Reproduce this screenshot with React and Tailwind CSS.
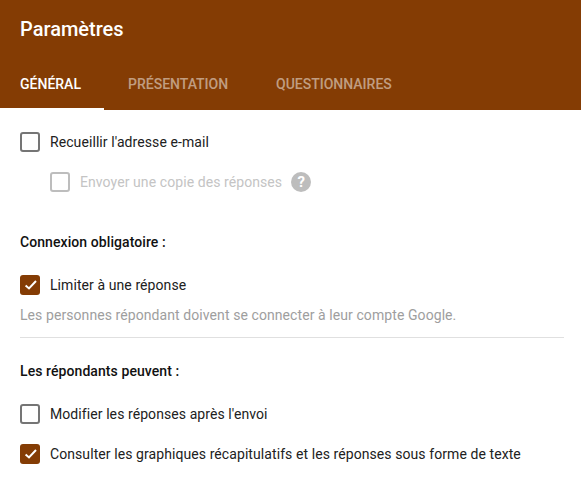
const Box = ({ checked, disabled }) => {
    if (checked) {
        return (
            <span className="w-5 h-5 shrink-0 rounded-[3px] bg-[#843c04] flex items-center justify-center">
                <svg className="w-4 h-4" viewBox="0 0 16 16" fill="none" stroke="#fff" strokeWidth="2">
                    <path d="M3.6 8.4 L7 11.4 L14 4" />
                </svg>
            </span>
        );
    }
    return (
        <span className={disabled ? "w-5 h-5 shrink-0 rounded-[3px] border-2 border-[#bdbdbd]" : "w-5 h-5 shrink-0 rounded-[3px] border-2 border-[#757575]"}></span>
    );
};

const Row = ({ checked, label }) => (
    <div className="flex items-center h-5 gap-[10px]">
        <Box checked={checked} />
        <span className="text-[14px] tracking-[0.08px] text-[#212121]">{label}</span>
    </div>
);

const App = () => {
    return (
        <div className="w-[581px] h-[484px] bg-white overflow-hidden font-['Roboto',sans-serif]">
            <div className="h-[110px] bg-[#843c04] flex flex-col justify-between">
                <h1 className="pl-5 pt-[17px] text-[20px] leading-6 font-medium text-white">Paramètres</h1>
                <div className="flex text-[14px] font-medium">
                    <div className="w-[104px] pl-5 h-[36px] border-b-2 border-white text-white">GÉNÉRAL</div>
                    <div className="pl-6 w-[172px] text-white/50">PRÉSENTATION</div>
                    <div className="text-white/50">QUESTIONNAIRES</div>
                </div>
            </div>

            <div className="px-5 pt-[22px]">
                <Row label="Recueillir l'adresse e-mail" />
                <div className="flex items-center h-5 gap-[10px] mt-5 ml-[30px]">
                    <Box disabled />
                    <span className="text-[14px] tracking-[0.08px] text-[#c4c4c4]">Envoyer une copie des réponses</span>
                    <span className="w-5 h-5 rounded-full bg-[#bdbdbd] text-white text-[15px] font-bold flex items-center justify-center -ml-[1px]">?</span>
                </div>

                <h2 className="mt-[40px] text-[14px] tracking-[0.08px] leading-5 font-medium text-[#111]">Connexion obligatoire :</h2>
                <div className="mt-[23px]">
                    <Row checked label="Limiter à une réponse" />
                </div>
                <p className="mt-[10px] text-[14px] tracking-[0.08px] leading-5 text-[#9e9e9e]">Les personnes répondant doivent se connecter à leur compte Google.</p>
                <div className="mt-[12px] -mr-[3px] border-t border-[#e0e0e0]"></div>

                <h2 className="mt-[23px] text-[14px] tracking-[0.08px] leading-5 font-medium text-[#111]">Les répondants peuvent :</h2>
                <div className="mt-[23px]">
                    <Row label="Modifier les réponses après l'envoi" />
                </div>
                <div className="mt-5">
                    <Row checked label="Consulter les graphiques récapitulatifs et les réponses sous forme de texte" />
                </div>
            </div>
        </div>
    );
};

export default App;
